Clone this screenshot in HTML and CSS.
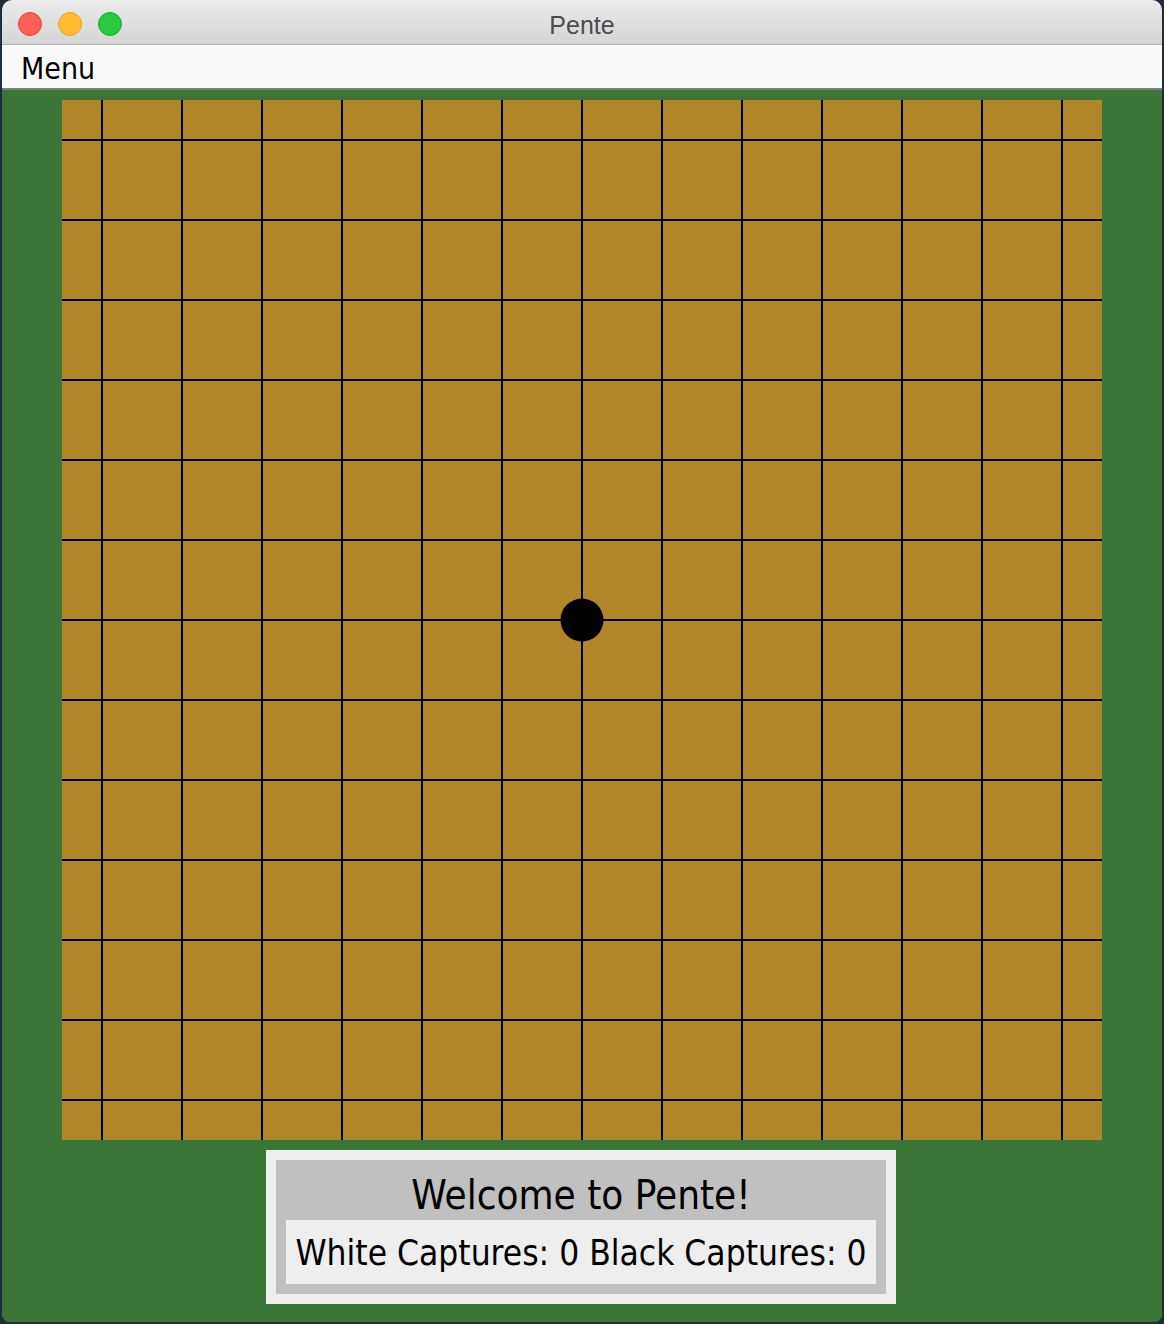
FILE: index.html
```html
<!DOCTYPE html>
<html>
<head>
<meta charset="utf-8">
<title>Pente</title>
<link rel="stylesheet" href="styles.css">
</head>
<body>
<div class="window">
  <div class="titlebar">
    <div class="lights">
      <span class="light red"></span>
      <span class="light yellow"></span>
      <span class="light green"></span>
    </div>
    <div class="title">Pente</div>
  </div>
  <div class="menubar"><span class="menu-item">Menu</span></div>
  <div class="content">
    <div class="board">
      <svg width="1040" height="1040" viewBox="0 0 1040 1040" xmlns="http://www.w3.org/2000/svg">
        <g fill="#000">
          <rect x="39" y="0" width="2" height="1040"/>
          <rect x="119" y="0" width="2" height="1040"/>
          <rect x="199" y="0" width="2" height="1040"/>
          <rect x="279" y="0" width="2" height="1040"/>
          <rect x="359" y="0" width="2" height="1040"/>
          <rect x="439" y="0" width="2" height="1040"/>
          <rect x="519" y="0" width="2" height="1040"/>
          <rect x="599" y="0" width="2" height="1040"/>
          <rect x="679" y="0" width="2" height="1040"/>
          <rect x="759" y="0" width="2" height="1040"/>
          <rect x="839" y="0" width="2" height="1040"/>
          <rect x="919" y="0" width="2" height="1040"/>
          <rect x="999" y="0" width="2" height="1040"/>
          <rect y="39" x="0" height="2" width="1040"/>
          <rect y="119" x="0" height="2" width="1040"/>
          <rect y="199" x="0" height="2" width="1040"/>
          <rect y="279" x="0" height="2" width="1040"/>
          <rect y="359" x="0" height="2" width="1040"/>
          <rect y="439" x="0" height="2" width="1040"/>
          <rect y="519" x="0" height="2" width="1040"/>
          <rect y="599" x="0" height="2" width="1040"/>
          <rect y="679" x="0" height="2" width="1040"/>
          <rect y="759" x="0" height="2" width="1040"/>
          <rect y="839" x="0" height="2" width="1040"/>
          <rect y="919" x="0" height="2" width="1040"/>
          <rect y="999" x="0" height="2" width="1040"/>
          <circle cx="520" cy="520" r="21.5"/>
        </g>
      </svg>
    </div>
    <div class="status">
      <div class="status-inner">
        <div class="welcome">Welcome to Pente!</div>
        <div class="captures">White Captures: 0 Black Captures: 0</div>
      </div>
    </div>
  </div>
</div>
</body>
</html>
```
FILE: styles.css
```css
html, body {
  margin: 0;
  padding: 0;
}
body {
  background: #1f2d3c;
  width: 1164px;
  height: 1324px;
  overflow: hidden;
}
.window {
  margin-left: 2px;
  width: 1160px;
  height: 1322px;
  border-radius: 10px 10px 8px 8px;
  overflow: hidden;
  display: flex;
  flex-direction: column;
  background: #3a7737;
}
.titlebar {
  height: 44px;
  border-bottom: 1px solid #b4b4b4;
  background: linear-gradient(#ebebeb, #d5d5d5);
  display: flex;
  align-items: center;
  position: relative;
}
.lights {
  display: flex;
  gap: 16px;
  padding-left: 16px;
  padding-top: 3px;
}
.light {
  width: 24px;
  height: 24px;
  border-radius: 50%;
  box-sizing: border-box;
}
.light.red { background: #fe5f57; border: 1px solid #e2463f; }
.light.yellow { background: #febc2e; border: 1px solid #e1a326; }
.light.green { background: #28c840; border: 1px solid #1eac2c; }
.title {
  position: absolute;
  left: 0;
  right: 0;
  top: 0;
  height: 44px;
  line-height: 50px;
  text-align: center;
  font-family: "Liberation Sans", Arial, sans-serif;
  font-size: 25px;
  color: #4d4d4d;
}
.menubar {
  background: #fafafa;
  border-bottom: 2px solid #7f7f7f;
  display: flex;
  align-items: center;
  box-sizing: border-box;
  height: 45px;
}
.menu-item {
  font-family: "DejaVu Sans Condensed", "DejaVu Sans", sans-serif;
  font-size: 30px;
  color: #000;
  padding-left: 19px;
  padding-top: 3px;
}
.content {
  flex: 1;
  background: #3a7737;
  display: flex;
  flex-direction: column;
  align-items: center;
  padding-top: 10px;
}
.board {
  width: 1040px;
  height: 1040px;
  background: #b08628;
}
.board svg {
  display: block;
}
.status {
  margin-top: 10px;
  margin-left: -2px;
  background: #eeeeee;
  padding: 10px;
  width: 630px;
  box-sizing: border-box;
}
.status-inner {
  background: #c0c0c0;
  padding: 0 10px 10px;
  display: flex;
  flex-direction: column;
}
.welcome {
  height: 60px;
  font-family: "DejaVu Sans Condensed", "DejaVu Sans", sans-serif;
  font-size: 40px;
  line-height: 70px;
  text-align: center;
  color: #000;
}
.captures {
  height: 64px;
  background: #eeeeee;
  font-family: "DejaVu Sans Condensed", "DejaVu Sans", sans-serif;
  font-size: 35px;
  line-height: 66px;
  text-align: center;
  color: #000;
  white-space: nowrap;
}
```
